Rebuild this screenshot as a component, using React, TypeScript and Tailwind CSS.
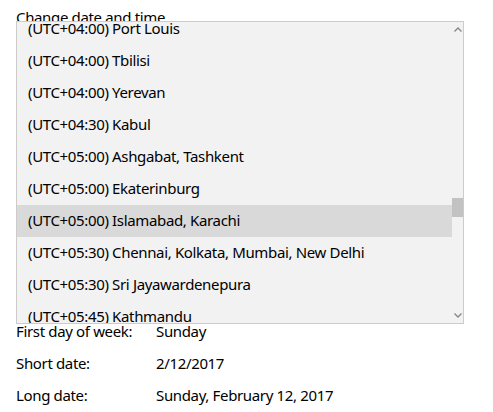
import React from 'react';

const zones = [
  '(UTC+04:00) Port Louis',
  '(UTC+04:00) Tbilisi',
  '(UTC+04:00) Yerevan',
  '(UTC+04:30) Kabul',
  '(UTC+05:00) Ashgabat, Tashkent',
  '(UTC+05:00) Ekaterinburg',
  '(UTC+05:00) Islamabad, Karachi',
  '(UTC+05:30) Chennai, Kolkata, Mumbai, New Delhi',
  '(UTC+05:30) Sri Jayawardenepura',
  '(UTC+05:45) Kathmandu',
];

const selected = '(UTC+05:00) Islamabad, Karachi';

function Chevron({ up }: { up?: boolean }) {
  return (
    <svg width="8" height="5" viewBox="0 0 8 5" className="text-[#858585]">
      <path
        d={up ? 'M0.5 4.5 L4 1 L7.5 4.5' : 'M0.5 0.5 L4 4 L7.5 0.5'}
        fill="none"
        stroke="currentColor"
        strokeWidth="1.3"
      />
    </svg>
  );
}

export default function App() {
  return (
    <div
      className="relative w-[493px] h-[412px] bg-white text-black overflow-hidden tracking-[-0.35px]"
      style={{ fontFamily: '"Noto Sans", "Open Sans", sans-serif' }}
    >
      <div className="px-4 pt-[1px] text-[15px] leading-[32px]">
        <div className="leading-[32px]">Change date and time</div>
        <div className="h-[282px]" />
        {[
          ['First day of week:', 'Sunday'],
          ['Short date:', '2/12/2017'],
          ['Long date:', 'Sunday, February 12, 2017'],
        ].map(([k, v]) => (
          <div key={k} className="flex h-[32px] items-center">
            <span className="w-[140px]">{k}</span>
            <span>{v}</span>
          </div>
        ))}
      </div>

      {/* open dropdown list */}
      <div className="absolute left-[16px] top-[21px] w-[448px] h-[303px] border border-[#cccccc] bg-[#f2f2f2] flex overflow-hidden">
        <div className="flex-1 overflow-hidden">
          <div className="-mt-[9px]">
            {zones.map((z) => (
              <div
                key={z}
                className={`h-[32px] flex items-center pl-[11px] pb-[1px] text-[15px] whitespace-nowrap ${
                  z === selected ? 'bg-[#d9d9d9]' : ''
                }`}
              >
                {z}
              </div>
            ))}
          </div>
        </div>
        <div className="w-[11px] flex flex-col items-center justify-between py-[5px]">
          <Chevron up />
          <div className="w-full flex-1 relative">
            <div className="absolute left-0 right-0 top-[166px] h-[19px] bg-[#c2c2c2]" />
          </div>
          <Chevron />
        </div>
      </div>
    </div>
  );
}
